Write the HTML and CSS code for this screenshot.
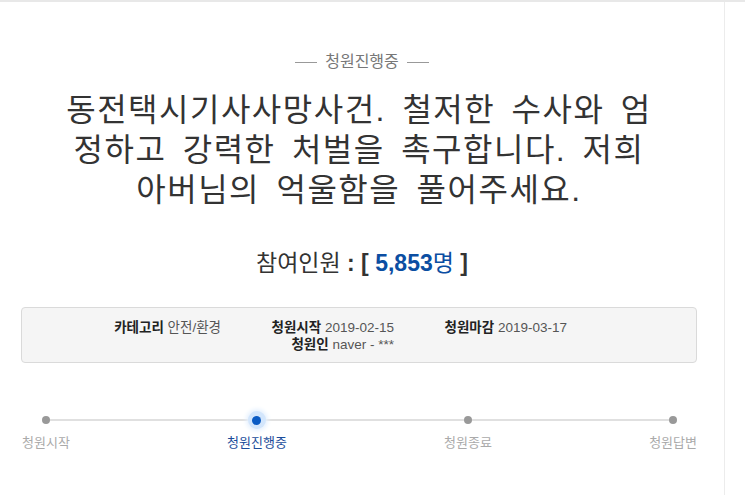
FILE: index.html
```html
<!DOCTYPE html>
<html lang="ko">

<head>
    <meta charset="UTF-8">
    <meta name="viewport" content="width=device-width, initial-scale=1.0">
    <title>청원진행중</title>
    <link rel="stylesheet" href="styles.css">
</head>

<body>
    <div class="page">
        <div class="status"><span class="status-line"></span>청원진행중<span class="status-line"></span></div>

        <h1 class="title">동전택시기사사망사건. 철저한 수사와 엄<br>정하고 강력한 처벌을 촉구합니다. 저희<br>아버님의 억울함을 풀어주세요.</h1>

        <p class="count">참여인원 <b>:</b> <b>[</b> <span class="count-num"><b>5,853</b>명</span> <b>]</b></p>

        <ul class="info">
            <li><strong>카테고리</strong> 안전/환경</li>
            <li><strong>청원시작</strong> 2019-02-15</li>
            <li><strong>청원마감</strong> 2019-03-17</li>
            <li class="info-author"><strong>청원인</strong> naver - ***</li>
        </ul>

        <div class="steps">
            <div class="step">
                <span class="dot"></span>
                <span class="step-name">청원시작</span>
            </div>
            <div class="step active">
                <span class="dot"></span>
                <span class="step-name">청원진행중</span>
            </div>
            <div class="step">
                <span class="dot"></span>
                <span class="step-name">청원종료</span>
            </div>
            <div class="step">
                <span class="dot"></span>
                <span class="step-name">청원답변</span>
            </div>
        </div>
    </div>
</body>

</html>
```

FILE: styles.css
```css
body {
    margin: 0;
    border-top: 2px solid #e8e8e8;
    font-family: "Liberation Sans", "Noto Sans CJK KR", sans-serif;
    color: #333;
    background: #fff;
}

.page {
    width: 725px;
    min-height: 493px;
    border-right: 1px solid #ececec;
    padding-top: 50px;
    box-sizing: border-box;
}

.status {
    display: flex;
    justify-content: center;
    align-items: center;
    gap: 8px;
    font-size: 16px;
    line-height: 20px;
    color: #777;
}

.status-line {
    width: 22px;
    height: 1px;
    background-color: #999;
}

.title {
    margin: 18px 0 0;
    padding-right: 6px;
    font-size: 32px;
    font-weight: normal;
    line-height: 40px;
    letter-spacing: 1.5px;
    word-spacing: 6px;
    text-align: center;
    color: #333;
}

.count {
    margin: 39px 0 0;
    font-size: 23px;
    line-height: 28px;
    text-align: center;
    color: #333;
}

.count-num {
    color: #0b4ea2;
}

.info {
    list-style: none;
    margin: 30px 0 0 21px;
    padding: 11px 0 9px 26px;
    width: 676px;
    box-sizing: border-box;
    display: grid;
    grid-template-columns: repeat(3, 173px);
    background-color: #f5f5f5;
    border: 1px solid #dadada;
    border-radius: 4px;
    font-size: 13.5px;
    line-height: 17px;
    color: #555;
}

.info li {
    text-align: right;
}

.info strong {
    color: #222;
}

.info-author {
    grid-column: 2;
}

.steps {
    position: relative;
    display: flex;
    justify-content: space-between;
    margin: 48px 0 0 22px;
    width: 675px;
}

.steps::before {
    content: "";
    position: absolute;
    left: 24px;
    right: 25px;
    top: 8px;
    height: 2px;
    background-color: #e0e0e0;
}

.step {
    position: relative;
    display: flex;
    flex-direction: column;
    align-items: center;
}

.dot {
    width: 18px;
    height: 18px;
    display: flex;
    align-items: center;
    justify-content: center;
}

.dot::after {
    content: "";
    width: 8px;
    height: 8px;
    border-radius: 50%;
    background-color: #999;
}

.step.active .dot {
    border-radius: 50%;
    background-color: #d3e6fc;
    box-shadow: 0 0 4px 2px #e6f1fe;
}

.step.active .dot::after {
    width: 9px;
    height: 9px;
    background-color: #0a5bc4;
}

.step-name {
    margin-top: 5px;
    font-size: 13px;
    line-height: 18px;
    color: #aaa;
}

.step.active .step-name {
    color: #1b4d9b;
}
```
